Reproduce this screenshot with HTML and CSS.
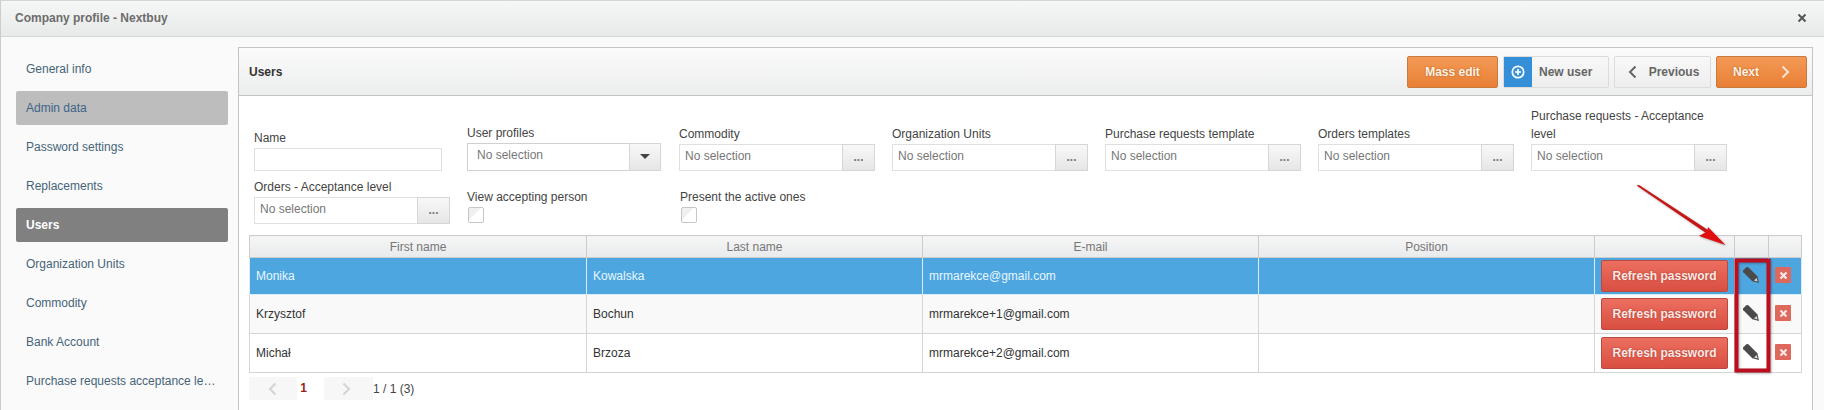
FILE: index.html
```html
<!DOCTYPE html>
<html lang="en">
<head>
<meta charset="utf-8">
<title>Company profile - Nextbuy</title>
<link rel="stylesheet" href="styles.css">
</head>
<body>
<div class="window">
  <header class="titlebar">
    <span class="title">Company profile - Nextbuy</span>
    <svg class="close" width="10" height="10" viewBox="0 0 10 10"><path d="M1.5 1.5l7 7M8.500 1.500l-7 7" stroke="#555" stroke-width="2"/></svg>
  </header>
  <div class="content">
    <nav class="sidebar">
      <a class="nav">General info</a>
      <a class="nav soft">Admin data</a>
      <a class="nav">Password settings</a>
      <a class="nav">Replacements</a>
      <a class="nav current">Users</a>
      <a class="nav">Organization Units</a>
      <a class="nav">Commodity</a>
      <a class="nav">Bank Account</a>
      <a class="nav">Purchase requests acceptance level</a>
    </nav>
    <main class="panel">
      <div class="panel-head">
        <h2 class="panel-title">Users</h2>
        <div class="actions">
          <button class="btn orange mass">Mass edit</button>
          <button class="btn plain newuser"><span class="plus"><svg width="14" height="14" viewBox="0 0 14 14"><circle cx="7" cy="7" r="5.700" fill="none" stroke="#fff" stroke-width="1.700"/><path d="M7 4v6M4 7h6" stroke="#fff" stroke-width="1.700"/></svg></span><span class="newlabel">New user</span></button>
          <button class="btn plain prev"><svg width="9" height="14" viewBox="0 0 9 14"><path d="M7.500 1.500L2 7l5.500 5.500" fill="none" stroke="#666" stroke-width="2"/></svg><span>Previous</span></button>
          <button class="btn orange next"><span>Next</span><svg width="9" height="14" viewBox="0 0 9 14"><path d="M1.500 1.500L7 7l-5.500 5.500" fill="none" stroke="#fbe6d4" stroke-width="2"/></svg></button>
        </div>
      </div>
      <div class="panel-body">
        <form class="filters">
          <div class="field"><label>Name</label><div class="box text"></div></div>
          <div class="field narrow"><label>User profiles</label><div class="box tall"><span class="val pad">No selection</span><span class="side drop"><i class="caret"></i></span></div></div>
          <div class="field"><label>Commodity</label><div class="box"><span class="val">No selection</span><span class="side">...</span></div></div>
          <div class="field"><label>Organization Units</label><div class="box"><span class="val">No selection</span><span class="side">...</span></div></div>
          <div class="field"><label>Purchase requests template</label><div class="box"><span class="val">No selection</span><span class="side">...</span></div></div>
          <div class="field"><label>Orders templates</label><div class="box"><span class="val">No selection</span><span class="side">...</span></div></div>
          <div class="field"><label>Purchase requests - Acceptance level</label><div class="box"><span class="val">No selection</span><span class="side">...</span></div></div>
          <div class="field"><label>Orders - Acceptance level</label><div class="box"><span class="val">No selection</span><span class="side">...</span></div></div>
          <div class="field"><label>View accepting person</label><span class="check"></span></div>
          <div class="field"><label>Present the active ones</label><span class="check"></span></div>
        </form>
        <table class="grid">
          <colgroup><col class="c0"><col class="c1"><col class="c1"><col class="c1"><col class="c2"><col class="c3"><col class="c4"></colgroup>
          <thead><tr><th>First name</th><th>Last name</th><th>E-mail</th><th>Position</th><th></th><th></th><th></th></tr></thead>
          <tbody>
            <tr class="selected"><td>Monika</td><td>Kowalska</td><td>mrmarekce@gmail.com</td><td></td>
              <td class="mid"><button class="refresh">Refresh password</button></td>
              <td class="mid"><svg class="pencil" width="18" height="18" viewBox="0 0 18 18"><path d="M1.300 4.300L4.300 1.300q1-.8 2 0L15.300 10.300 17 17 10.300 15.300 1.300 6.300q-.8-1 0-2z" fill="#4a4a4a"/><path d="M12 14.600l2.600-2.600 1 3.600z" fill="#d8d8d8"/></svg></td>
              <td class="mid"><span class="del"><svg width="9" height="9" viewBox="0 0 9 9"><path d="M1.500 1.500l6 6M7.500 1.500l-6 6" stroke="#fbe9e6" stroke-width="2.200"/></svg></span></td></tr>
            <tr><td>Krzysztof</td><td>Bochun</td><td>mrmarekce+1@gmail.com</td><td></td>
              <td class="mid"><button class="refresh">Refresh password</button></td>
              <td class="mid"><svg class="pencil" width="18" height="18" viewBox="0 0 18 18"><path d="M1.300 4.300L4.300 1.300q1-.8 2 0L15.300 10.300 17 17 10.300 15.300 1.300 6.300q-.8-1 0-2z" fill="#4a4a4a"/><path d="M12 14.600l2.600-2.600 1 3.600z" fill="#d8d8d8"/></svg></td>
              <td class="mid"><span class="del"><svg width="9" height="9" viewBox="0 0 9 9"><path d="M1.500 1.500l6 6M7.500 1.500l-6 6" stroke="#fbe9e6" stroke-width="2.200"/></svg></span></td></tr>
            <tr><td>Michał</td><td>Brzoza</td><td>mrmarekce+2@gmail.com</td><td></td>
              <td class="mid"><button class="refresh">Refresh password</button></td>
              <td class="mid"><svg class="pencil" width="18" height="18" viewBox="0 0 18 18"><path d="M1.300 4.300L4.300 1.300q1-.8 2 0L15.300 10.300 17 17 10.300 15.300 1.300 6.300q-.8-1 0-2z" fill="#4a4a4a"/><path d="M12 14.600l2.600-2.600 1 3.600z" fill="#d8d8d8"/></svg></td>
              <td class="mid"><span class="del"><svg width="9" height="9" viewBox="0 0 9 9"><path d="M1.500 1.500l6 6M7.500 1.500l-6 6" stroke="#fbe9e6" stroke-width="2.200"/></svg></span></td></tr>
          </tbody>
        </table>
        <div class="pager">
          <span class="pg"><svg width="9" height="14" viewBox="0 0 9 14"><path d="M7.500 1.500L2 7l5.500 5.500" fill="none" stroke="#d4d4d4" stroke-width="2"/></svg></span>
          <span class="num">1</span>
          <span class="pg pg-next"><svg width="9" height="14" viewBox="0 0 9 14"><path d="M1.500 1.500L7 7l-5.500 5.500" fill="none" stroke="#d4d4d4" stroke-width="2"/></svg></span>
          <span class="count">1 / 1 (3)</span>
        </div>
      </div>
    </main>
  </div>
  <svg class="overlay" width="1824" height="410" viewBox="0 0 1824 410">
    <path d="M1636.500 185.500L1639 185 1708 230 1706 233z" fill="#c81414"/>
    <path d="M1725.500 245L1699 236 1707 231.500 1708 227z" fill="#e00e0e"/>
    <rect x="1736.500" y="260.500" width="32" height="110" fill="none" stroke="#b90f1e" stroke-width="4"/>
  </svg>
</div>
</body>
</html>
```
FILE: styles.css
```css
* { box-sizing: border-box; }
html, body { margin: 0; padding: 0; }
body {
  width: 1824px;
  height: 410px;
  overflow: hidden;
  font-family: "Liberation Sans", Arial, sans-serif;
  font-size: 12px;
  color: #333;
  background: #fafafa;
}
.window {
  position: relative;
  width: 1824px;
  height: 410px;
  overflow: hidden;
  border-left: 1px solid #ccc;
  border-top: 1px solid #d5d5d5;
}
.titlebar {
  height: 36px;
  display: flex;
  align-items: center;
  justify-content: space-between;
  padding: 0 17px 2px 14px;
  background: linear-gradient(#f5f6f6, #e8eaea);
  border-bottom: 1px solid #d4d6d6;
}
.title { font-weight: bold; color: #6c6c6c; font-size: 12px; }
.content { display: flex; height: 373px; }
.sidebar {
  width: 237px;
  flex: none;
  padding: 15px 0 0 15px;
  display: flex;
  flex-direction: column;
  gap: 5px;
}
.nav {
  display: block;
  width: 212px;
  height: 34px;
  flex: none;
  line-height: 34px;
  padding: 0 11px 0 10px;
  color: #466479;
  border-radius: 2px;
  white-space: nowrap;
  overflow: hidden;
  text-overflow: ellipsis;
}
.nav.soft { background: #bdbdbd; color: #3f6488; }
.nav.current { background: #808080; color: #fff; font-weight: bold; }
.panel {
  width: 1575px;
  margin-top: 10px;
  flex: none;
  display: flex;
  flex-direction: column;
  border-left: 1px solid #c4c4c4;
  border-right: 1px solid #c4c4c4;
}
.panel-head {
  height: 49px;
  flex: none;
  display: flex;
  align-items: center;
  justify-content: space-between;
  padding: 0 5px 0 10px;
  background: linear-gradient(#fbfbfb, #eceded);
  border-top: 1px solid #c4c4c4;
  border-bottom: 1px solid #c4c4c4;
  margin-left: -1px;
  margin-right: -1px;
  border-left: 1px solid #c4c4c4;
  border-right: 1px solid #c4c4c4;
}
.panel-title { margin: 0; font-size: 12px; font-weight: bold; color: #333; }
.actions { display: flex; gap: 5px; }
.btn {
  height: 32px;
  padding: 0;
  font: bold 12px "Liberation Sans", Arial, sans-serif;
  border-radius: 2px;
  display: flex;
  align-items: center;
  justify-content: center;
}
.orange {
  background: linear-gradient(#f39a56, #e97f35);
  border: 1px solid #c87a3f;
  color: #fdf2e5;
  text-shadow: 0 0 2px #b4621f;
}
.plain {
  background: linear-gradient(#f8f8f8, #eeeeee);
  border: 1px solid #dcdcdc;
  color: #666;
}
.mass { width: 91px; }
.newuser { width: 106px; justify-content: flex-start; }
.plus {
  width: 28px;
  height: 30px;
  background: #348fd8;
  display: flex;
  align-items: center;
  justify-content: center;
}
.newlabel { margin-left: 7px; }
.prev { width: 97px; gap: 12px; padding-left: 2px; }
.next { width: 91px; gap: 22px; }
.panel-body { flex: 1; background: #fff; padding: 11px 11px 0 10px; }
.filters {
  display: flex;
  flex-wrap: wrap;
  align-items: flex-end;
  row-gap: 7px;
  padding-left: 5px;
  width: 1560px;
}
.field { width: 213px; flex: none; }
.field.narrow { width: 212px; }
.field label { display: block; line-height: 18px; width: 196px; margin-bottom: 1px; color: #444; }
.box {
  width: 196px;
  height: 27px;
  display: flex;
  background: #fff;
  border: 1px solid #e0e0e0;
}
.box.text { width: 188px; height: 23px; }
.box.tall { width: 194px; height: 28px; border-color: #d0d0d0; }
.val { flex: 1; line-height: 23px; padding-left: 5px; color: #777; }
.val.pad { padding-left: 9px; }
.side {
  width: 33px;
  flex: none;
  margin: -1px -1px -1px 0;
  text-align: center;
  line-height: 25px;
  font-weight: bold;
  color: #777;
  background: linear-gradient(#f8f8f8, #e6e6e6);
  border: 1px solid #d6d6d6;
}
.drop { width: 32px; display: flex; justify-content: center; padding-top: 10px; }
.caret {
  width: 0;
  height: 0;
  border-left: 5px solid transparent;
  border-right: 5px solid transparent;
  border-top: 5px solid #444;
}
.check {
  display: block;
  width: 16px;
  height: 16px;
  margin: 0 0 1px 1px;
  border: 1px solid #c6c6c6;
  border-radius: 2px;
  background: linear-gradient(135deg, #f0f0f0 40%, #fff 45%);
}
.grid {
  margin-top: 11px;
  width: 1552px;
  border-collapse: collapse;
  table-layout: fixed;
}
.c0 { width: 337px; }
.c1 { width: 336px; }
.c2 { width: 140px; }
.c3 { width: 34px; }
.c4 { width: 33px; }
.grid th {
  height: 22px;
  padding: 0;
  font-weight: normal;
  color: #777;
  background: linear-gradient(#f6f6f6, #e8eaec);
  border: 1px solid #ccc;
}
.grid td {
  height: 39px;
  padding: 0 6px;
  border: 1px solid #d6d6d6;
  color: #333;
  background: #fff;
}
.grid tbody tr:nth-child(2) td { background: #f9f9f9; }
.grid tr.selected td { height: 37px; background: #4ea6e0; color: #e8f7ff; border-color: #d9ecf8; }
.grid td.mid { padding: 0; text-align: center; vertical-align: middle; }
.refresh {
  display: block;
  width: 127px;
  height: 32px;
  margin: 0 auto;
  padding: 0;
  font: bold 12px "Liberation Sans", Arial, sans-serif;
  color: #fbe9e5;
  text-shadow: 0 0 2px #a83a30;
  background: linear-gradient(#ec6f5f, #d94f42);
  border: 1px solid #b94a40;
  border-radius: 2px;
}
.pencil { display: block; margin: 0 auto; transform: translate(-1px, -1px); }
.del {
  width: 16px;
  height: 16px;
  margin: 0 auto;
  display: flex;
  align-items: center;
  justify-content: center;
  background: #df685d;
  border-radius: 1px;
  transform: translate(-2px, -1px);
}
.pager { display: flex; align-items: center; height: 23px; margin-top: 4px; }
.pg { width: 48px; height: 23px; background: #f7f7f7; display: flex; align-items: center; justify-content: center; padding-right: 2px; }
.pg-next { width: 49px; padding-right: 5px; }
.num { width: 27px; height: 23px; line-height: 23px; text-align: center; color: #a01c1c; font-weight: bold; background: #fff; padding-right: 14px; }
.count { color: #444; }
.overlay { position: absolute; left: -1px; top: -1px; pointer-events: none; filter: drop-shadow(1px 1px 1px rgba(0, 0, 0, .3)); }
```
